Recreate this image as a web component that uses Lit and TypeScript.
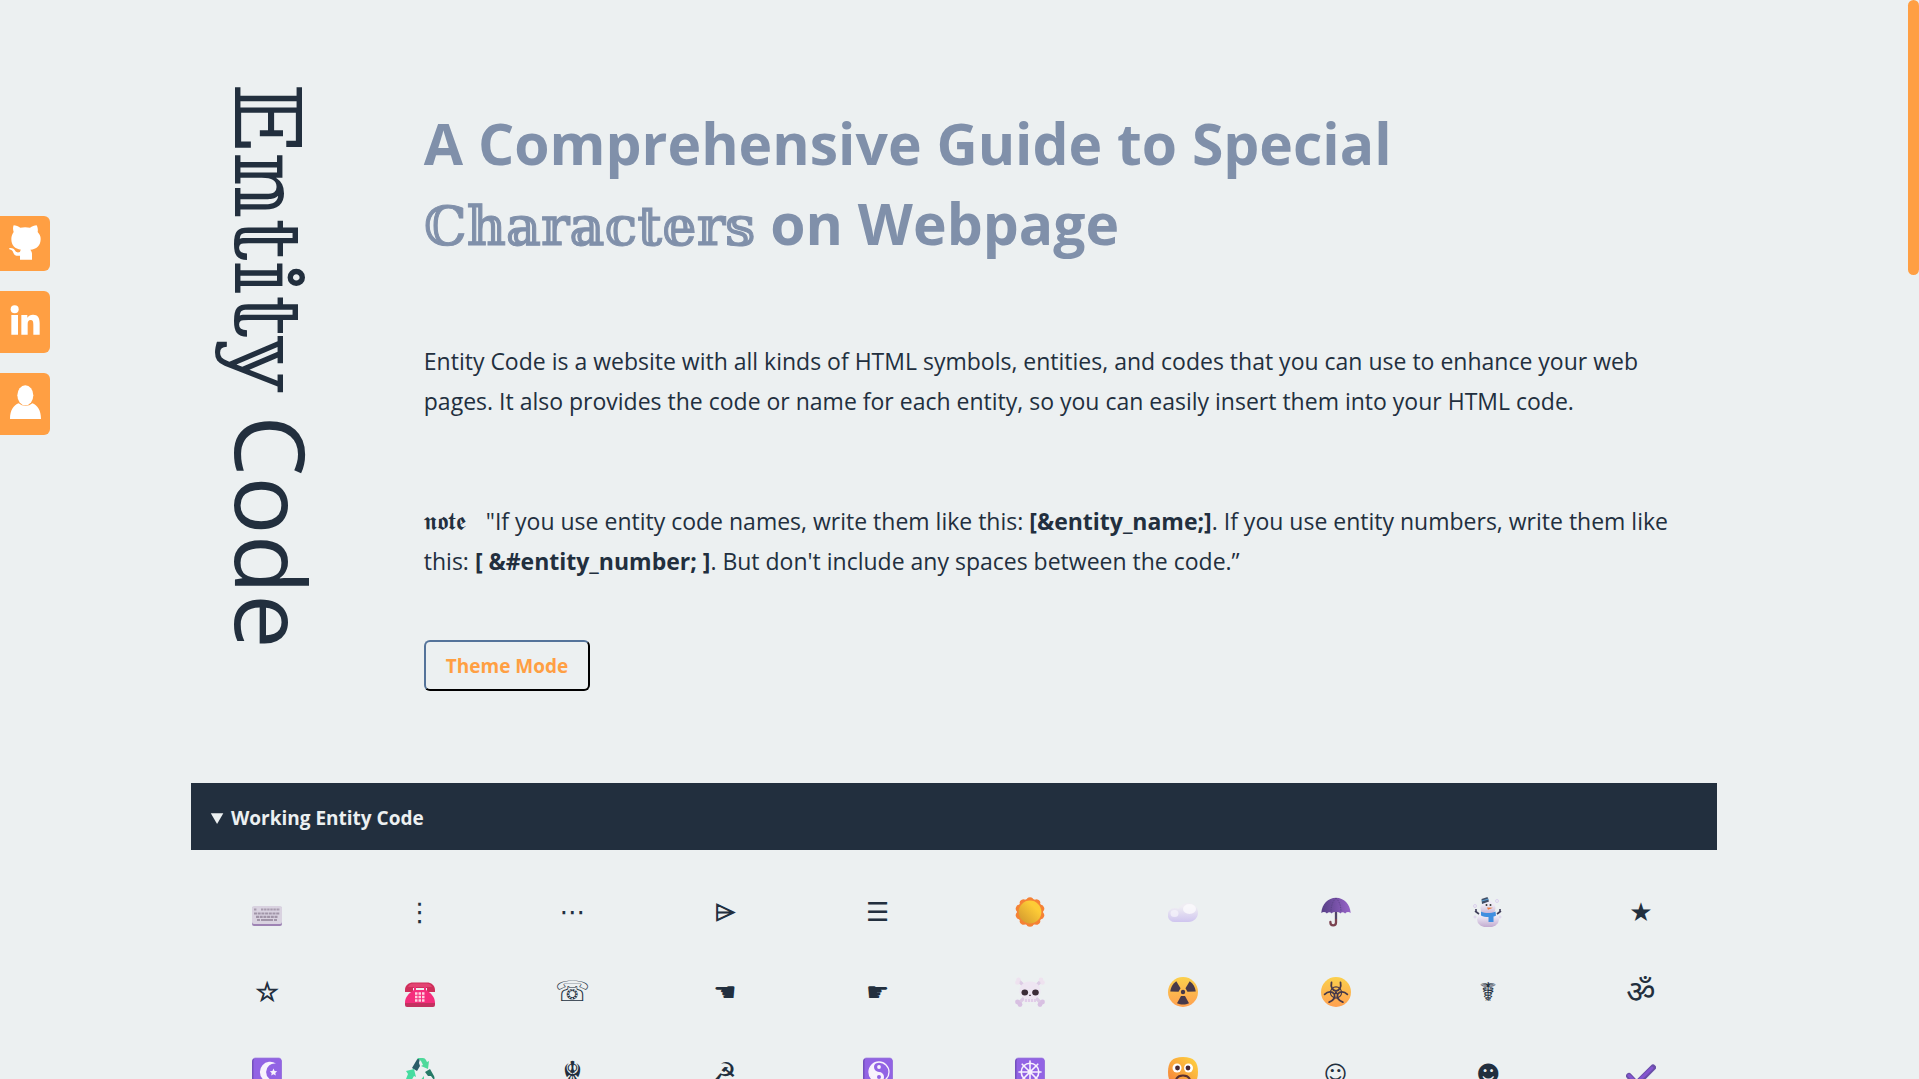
import { LitElement, html, svg, css } from "lit";
import { customElement, state } from "lit/decorators.js";

type Entity = { name: string; char?: string; size?: string; art?: unknown };

const tile = svg`
  <rect x="0.5" y="0.5" width="29" height="29" rx="3" fill="#b79ceb"/>
  <rect x="0" y="1.5" width="29.5" height="28.5" rx="3" fill="#7350bd"/>
  <rect x="1.5" y="1.5" width="28" height="27.5" rx="2.5" fill="#9263e4"/>`;

const keyboardArt = svg`
  <rect x="0" y="10" width="30" height="19" rx="2" fill="#9e83b4"/>
  <rect x="0" y="9" width="30" height="18" rx="2" fill="#d9d2e0"/>
  <path d="M2 12.5h3M9 12.5h19" stroke="#a79bad" stroke-width="2" stroke-dasharray="2.4 .7"/>
  <path d="M2 16.5h26M4 19.8h22" stroke="#a195a8" stroke-width="2.2" stroke-dasharray="3 .7"/>
  <path d="M5 23h3M9 23h12M22 23h3" stroke="#a195a8" stroke-width="2.2"/>`;

const sunArt = svg`
  <g fill="#f58235">
    ${[0, 36, 72, 108, 144, 180, 216, 252, 288, 324].map(
      (a) => svg`<circle cx="15" cy="3.8" r="3.6" transform=${`rotate(${a} 15 15)`}/>`
    )}
    <circle cx="15" cy="15" r="13.2"/>
  </g>
  <circle cx="15" cy="15" r="11.4" fill="url(#sun)"/>`;

const cloudArt = svg`
  <path d="M7 25a7 7 0 0 1-.5-14c1.500 0 3 .3 4 1C12 8 16 6 20 6c6 0 10 4.300 10 9.500S26 25 20.500 25z" fill="url(#cloud)"/>
  <ellipse cx="21.500" cy="12" rx="6.500" ry="5" fill="#fbfafc" opacity=".8"/>
  <ellipse cx="6.500" cy="16.500" rx="4" ry="3.600" fill="#f7f5fb" opacity=".7"/>`;

const umbrellaArt = svg`
  <path d="M15 14v11.500a2.800 2.800 0 0 1-5.600 0v-.5" fill="none" stroke="#7b4350" stroke-width="2.300" stroke-linecap="round"/>
  <path d="M15 12v10" stroke="#514669" stroke-width="2"/>
  <path d="M.3 16C1 7 7 1 15 .8 23 1 29 7 29.700 16c-1.700-1.300-3.800-1.300-5.600.4-1.400-1.700-3.600-1.700-4.700 0-1.300-1.900-7.500-1.900-8.800 0-1.100-1.700-3.300-1.700-4.700 0C4.100 14.700 2 14.700.3 16z" fill="url(#umb)"/>
  <path d="M15 1c-4 4-5 9-5 14M15 1c4 4 5 9 5 14" fill="none" stroke="#54407f" stroke-width=".7" stroke-dasharray="1.500 1"/>`;

const snowmanArt = svg`
  <g fill="none" stroke="#dcd0ee"><circle cx="2" cy="9" r="1.500"/><circle cx="24" cy="4" r="1.500"/><circle cx="2" cy="20" r="1"/><circle cx="27" cy="20" r="1"/></g>
  <path d="M6 17l-4-3M3 12v3M24 17l4-3M27 12v3" stroke="#3f3e5a" stroke-width="1.600"/>
  <ellipse cx="15" cy="22.500" rx="11" ry="8" fill="url(#snow)"/>
  <circle cx="15" cy="11" r="7.500" fill="url(#snow)"/>
  <path d="M8 14.500c4 2 10 2 14.500 0l.5 4c-1 .8-2 1-2.500 1v5.500h-5v-5c-3 0-5.500-.5-7.500-1.500z" fill="#3f8fe0"/>
  <path d="M8.500 2l6-2 1.500 4.500-7 2.500z" fill="#435068"/><path d="M8.800 4l6.700-2" stroke="#5c9fd2" stroke-width="1.200"/>
  <path d="M14 10.500l6 .3-5 2z" fill="#ee7a38"/><circle cx="13.500" cy="8" r="1" fill="#333"/><circle cx="17.500" cy="8" r="1" fill="#333"/>`;

const phoneArt = svg`
  <path d="M0 13C0 8 4 5.500 8 5.500h14c4 0 8 2.500 8 7.500v2h-8v-4H8v4H0z" fill="#cf2f5b"/>
  <path d="M3 10c1-2.500 3-3.500 6-3.500h12c3 0 5 1 6 3.500z" fill="#e24472"/>
  <path d="M0 25.500h30V28a2 2 0 0 1-2 2H2a2 2 0 0 1-2-2z" fill="#c33160"/>
  <path d="M9 13V10h2v3h8v-3h2v3c5 3 9 7 9 13H0c0-6 4-10 9-13z" fill="#f52d7c"/>
  <path d="M10 16.500h10M10 20h10M10 23.500h10" stroke="#ffd3e1" stroke-width="2.500" stroke-dasharray="2.500 1"/>`;

const skullArt = svg`
  <path d="M4 4l22 22M26 4L4 26" stroke="#dccbe4" stroke-width="3.200"/>
  <g fill="#eee2ef"><circle cx="3.500" cy="2.800" r="2.300"/><circle cx="2.400" cy="5.500" r="2.300"/><circle cx="26" cy="2.800" r="2.300"/><circle cx="27.600" cy="5.500" r="2.300"/></g>
  <g fill="#d8c0e2"><circle cx="2.500" cy="25" r="2.400"/><circle cx="5" cy="27.500" r="2.400"/><circle cx="27.500" cy="25" r="2.400"/><circle cx="25" cy="27.500" r="2.400"/></g>
  <path d="M15 4.500c7 0 10.500 4.500 10.500 9.500 0 4-2 6-4.500 7v4H9v-4c-2.500-1-4.500-3-4.500-7C4.500 9 8 4.500 15 4.500z" fill="#eee5f2"/>
  <path d="M11 22v3M14 22v3M17 22v3M20 22v3" stroke="#d3b6df"/>
  <ellipse cx="9.800" cy="15.500" rx="3.300" ry="3" fill="#3b2c38"/><ellipse cx="20.500" cy="15.500" rx="3.300" ry="3" fill="#3b2c38"/><path d="M14 19l1-1.800 1 1.800z" fill="#3b2c38"/>`;

const radioArt = svg`
  <circle cx="15" cy="15" r="15" fill="url(#amber)"/>
  <g fill="#47394a"><circle cx="15" cy="15" r="2.200"/>
  ${[0, 120, 240].map(
    (a) => svg`<path transform=${`rotate(${a} 15 15)`} d="M13 19h4l4 7.200c-3.500 1.800-8.500 1.800-12 0z"/>`
  )}</g>`;

const bioArt = svg`
  <circle cx="15" cy="15" r="15" fill="url(#amber)"/>
  <circle cx="15" cy="15.500" r="5.600" fill="none" stroke="#47394a" stroke-width="1.100"/>
  <g fill="none" stroke="#47394a" stroke-width="1.800" stroke-linecap="round">
  ${[0, 120, 240].map(
    (a) => svg`<path transform=${`rotate(${a} 15 16)`} d="M10.500 5.500C9.500 10 11.500 13.500 15 14c3.500-.5 5.500-4 4.500-8.500M15 14v2"/>`
  )}</g>`;

const moonArt = svg`${tile}
  <path d="M24 6.500A10.300 10.300 0 1 0 24 23.500 8.600 8.600 0 1 1 24 6.500z" fill="#f8f2fd"/>
  <path d="M21.500 11.500l1.100 2.400 2.600.3-1.900 1.800.5 2.600-2.300-1.300-2.300 1.300.5-2.600-1.900-1.800 2.600-.3z" fill="#f8f2fd"/>`;

const recycleArt = svg`
  <path d="M7 11L12 2.500Q13 1 15 1l-1 5 1 3-3 5z" fill="#2a5c68"/>
  <path d="M12 1h6q2 0 3 2l1 2 2-1-1 8-7-3 2-1-2-4z" fill="#4fd99b"/>
  <path d="M20 15l5-3 4 7q1 2 0 4l-3-4h-3z" fill="#267a67"/>
  <path d="M29 23l-2 4q-1 2-3 2h-5v2l-5-6 5-6v3h6z" fill="#4fd99b"/>
  <path d="M1 14l8-2 2 8-2-1-3 5 7 .5V29H5q-3 0-4-3-1-2 0-4l2-5z" fill="#46dca0"/>
  <path d="M5 23h7v6H5q-2 0-3-2z" fill="#267a67"/>`;

const yinArt = svg`${tile}
  <circle cx="16" cy="15" r="10" fill="none" stroke="#f8f2fd" stroke-width="1.300"/>
  <path d="M16 5a10 10 0 1 0 0 20 5 5 0 0 0 0-10 5 5 0 0 1 0-10z" fill="#f8f2fd"/>
  <circle cx="16" cy="10" r="1.900" fill="#f8f2fd"/><circle cx="16" cy="20" r="2" fill="#9263e4"/>`;

const wheelArt = svg`${tile}
  <g stroke="#f8f2fd" fill="none" stroke-width="1.600"><circle cx="15" cy="15" r="8.800"/>
  ${[0, 45, 90, 135].map((a) => svg`<path stroke-linecap="round" transform=${`rotate(${a} 15 15)`} d="M15 4v22"/>`)}</g>
  <circle cx="15" cy="15" r="2.400" fill="#f8f2fd"/>`;

const frownArt = svg`
  <path d="M15 0C26 0 30 5 30 15s-4 15-15 15S0 25 0 15 4 0 15 0z" fill="url(#face)"/>
  <circle cx="9" cy="11" r="4.500" fill="#fff"/><circle cx="20.500" cy="11" r="4.500" fill="#fff"/>
  <circle cx="9.500" cy="11" r="2.400" fill="#4a2a33"/><circle cx="20" cy="11" r="2.400" fill="#4a2a33"/>
  <path d="M8.500 21.500c2.500-4 10.500-4 13 0" fill="none" stroke="#5a3030" stroke-width="2" stroke-linecap="round"/>`;

const checkArt = svg`
  <path d="M3 19l7.500 8L27 10.500" fill="none" stroke="#6a4fa8" stroke-width="6" stroke-linecap="round" stroke-linejoin="round"/>
  <path d="M3 18.500l7.500 7.500L26 11" fill="none" stroke="#8455cf" stroke-width="3" stroke-linecap="round" stroke-linejoin="round"/>`;

const entities: Entity[] = [
  { name: "Keyboard", art: keyboardArt },
  { name: "Vertical ellipsis", char: "⋮" },
  { name: "Midline ellipsis", char: "⋯" },
  { name: "Conical taper", char: "⌲", size: "heavy" },
  { name: "Trigram", char: "☰" },
  { name: "Sun", art: sunArt },
  { name: "Cloud", art: cloudArt },
  { name: "Umbrella", art: umbrellaArt },
  { name: "Snowman", art: snowmanArt },
  { name: "Black star", char: "★" },
  { name: "White star", char: "☆", size: "heavy" },
  { name: "Telephone", art: phoneArt },
  { name: "White telephone", char: "☏", size: "medium" },
  { name: "Left pointing hand", char: "☚" },
  { name: "Right pointing hand", char: "☛" },
  { name: "Skull and crossbones", art: skullArt },
  { name: "Radioactive", art: radioArt },
  { name: "Biohazard", art: bioArt },
  { name: "Caduceus", char: "☤" },
  { name: "Om", char: "ॐ", size: "large" },
  { name: "Star and crescent", art: moonArt },
  { name: "Recycling", art: recycleArt },
  { name: "Adi Shakti", char: "☬", size: "medium" },
  { name: "Hammer and sickle", char: "☭" },
  { name: "Yin yang", art: yinArt },
  { name: "Wheel of dharma", art: wheelArt },
  { name: "Frowning face", art: frownArt },
  { name: "Smiling face", char: "☺", size: "small" },
  { name: "Black smiling face", char: "☻", size: "small" },
  { name: "Check mark", art: checkArt },
];

@customElement("app-root")
export class AppRoot extends LitElement {
  @state() private dark = false;

  static styles = css`
    :host {
      display: block;
      --paper: #ecf0f1;
      --ink: #222f3e;
      --heading: #8090aa;
      --accent: #ff9f43;
      font-family: "Open Sans", "Noto Sans", sans-serif;
    }
    * { box-sizing: border-box; margin: 0; padding: 0; }
    .shell {
      display: grid;
      grid-template-columns: minmax(0, 1fr) 11px;
      height: 100vh;
      background: var(--paper);
      color: var(--ink);
    }
    .shell.dark { --paper: #222f3e; --ink: #ecf0f1; }
    .page { overflow-y: auto; scrollbar-width: none; }
    .thumb { height: 275px; border-radius: 6px; background: var(--accent); }
    .content { width: 80%; margin: 0 auto; }
    .social {
      position: fixed;
      left: 0;
      top: 216px;
      display: flex;
      flex-direction: column;
      gap: 20px;
    }
    .social a {
      display: flex;
      align-items: center;
      justify-content: center;
      width: 50px;
      height: 62px;
      padding-bottom: 4px;
      border-radius: 0 6px 6px 0;
      background: var(--accent);
    }
    .social a.short { height: 55px; padding-bottom: 2px; }
    .social svg { fill: #fff; }
    .hero { display: flex; padding-top: 83px; min-height: 783px; }
    .title {
      flex: none;
      width: 233px;
      padding-right: 75px;
      writing-mode: vertical-rl;
      text-orientation: sideways;
      font-weight: 400;
      font-size: 97px;
      line-height: 152px;
      white-space: nowrap;
    }
    .struck { font-family: "DejaVu Serif", "DejaVu Sans", serif; font-weight: 400; }
    .title .struck { font-size: 91px; }
    .lead .struck { font-size: 54px; line-height: 72px; -webkit-text-stroke: 1px currentColor; }
    .intro { flex: 1; padding-top: 20px; padding-right: 36px; }
    .lead { font-size: 57px; line-height: 80px; font-weight: 700; color: var(--heading); margin-bottom: 78px; }
    .text { font-size: 23px; line-height: 40px; margin-bottom: 80px; }
    .text.last { margin-bottom: 59px; }
    .note { font-family: "DejaVu Sans", serif; font-size: 25px; line-height: 24px; margin-right: 14px; }
    .theme {
      height: 51px;
      padding: 0 20px;
      font-family: inherit;
      font-size: 19px;
      font-weight: 700;
      color: var(--accent);
      background: transparent;
      border: 2px solid;
      border-color: #54739a #000 #000 #54739a;
      border-radius: 6px;
    }
    .bar {
      height: 67px;
      padding: 2px 20px 0;
      line-height: 67px;
      font-size: 19px;
      font-weight: 700;
      color: #ecf0f1;
      background: #222f3e;
    }
    .entities {
      display: grid;
      grid-template-columns: repeat(10, minmax(0, 1fr));
      grid-auto-rows: 80px;
      padding-top: 22px;
      list-style: none;
    }
    .entity { display: flex; align-items: center; justify-content: center; font-family: "DejaVu Sans", "Noto Sans", sans-serif; font-size: 26px; line-height: 40px; }
    .medium { font-size: 28px; }
    .large { font-size: 32px; }
    .small { font-size: 23px; padding-top: 4px; }
    .heavy { -webkit-text-stroke: 1px currentColor; }
  `;

  private toggle() {
    this.dark = !this.dark;
  }

  render() {
    return html`
      <div class="shell ${this.dark ? "dark" : ""}">
        <main class="page">
          <div class="content">
            <section class="hero">
              <h1 class="title"><span class="struck">𝔼𝕟𝕥𝕚𝕥𝕪</span> Code</h1>
              <div class="intro">
                <h2 class="lead">A Comprehensive Guide to Special <span class="struck">ℂ𝕙𝕒𝕣𝕒𝕔𝕥𝕖𝕣𝕤</span> on Webpage</h2>
                <p class="text">Entity Code is a website with all kinds of HTML symbols, entities, and codes that you can use to enhance your web pages. It also provides the code or name for each entity, so you can easily insert them into your HTML code.</p>
                <p class="text last"><span class="note">𝖓𝖔𝖙𝖊</span> "If you use entity code names, write them like this: <b>[&amp;entity_name;]</b>. If you use entity numbers, write them like this: <b>[ &amp;#entity_number; ]</b>. But don't include any spaces between the code.”</p>
                <button class="theme" @click=${this.toggle}>Theme Mode</button>
              </div>
            </section>
            <details open>
              <summary class="bar">Working Entity Code</summary>
              <ul class="entities">
                ${entities.map((e) => html`<li class="entity ${e.size ?? ""}" title=${e.name}>${
                  e.art
                    ? html`<svg width="30" height="30" viewBox="0 0 30 30" aria-hidden="true">
                        <defs>
                          <linearGradient id="sun" x1="1" y1="0" x2="0" y2="1"><stop offset=".3" stop-color="#fdcb36"/><stop offset="1" stop-color="#cf942e"/></linearGradient>
                          <linearGradient id="cloud" x1="0" y1="0" x2="0" y2="1"><stop offset=".2" stop-color="#efedf3"/><stop offset="1" stop-color="#cfc5ef"/></linearGradient>
                          <linearGradient id="umb"><stop offset="0" stop-color="#574086"/><stop offset="1" stop-color="#9763c8"/></linearGradient>
                          <linearGradient id="snow" x1="0" y1="0" x2="0" y2="1"><stop offset=".3" stop-color="#eeeaf5"/><stop offset="1" stop-color="#c0a8ce"/></linearGradient>
                          <linearGradient id="amber" x1="0" y1="0" x2="0" y2="1"><stop offset="0" stop-color="#fbd04c"/><stop offset="1" stop-color="#ffa050"/></linearGradient>
                          <linearGradient id="face" x1="1" y1="0" x2="0" y2="1"><stop offset="0" stop-color="#ffd63f"/><stop offset="1" stop-color="#f57c3a"/></linearGradient>
                        </defs>
                        ${e.art}</svg>`
                    : e.char
                }</li>`)}
              </ul>
            </details>
          </div>
        </main>
        <div class="thumb"></div>
        <nav class="social" aria-label="Social links">
          <a class="short" href="#github" aria-label="GitHub">
            <svg width="32" height="35" viewBox="0 0 96 105"><path d="M14 1c7 0 14 3 20 7 9-2 20-2 29 0C69 4 76 1 83 1c4 8 4 15 3 20 6 7 9 13 9 21 0 20-13 31-31 32 3 4 5 8 5 12v18H33V92c-10 2-17-1-20-9-2-6-6-9-12-10-2-2 0-4 3-4 8 0 12 4 15 9 4 5 8 5 14 3 0-3 1-5 3-7C18 72 7 61 7 42c0-8 3-15 7-21-2-6-3-13 0-20z"/></svg>
          </a>
          <a href="#linkedin" aria-label="LinkedIn">
            <svg width="30" height="30" viewBox="0 0 90 90"><circle cx="14" cy="13" r="12"/><path d="M4 30h20v59H4zM34 30h18v8c4-6 9-9 17-9 15 0 20 10 20 26v34H70V59c0-8-1-14-8-14s-9 5-9 13v31H34z"/></svg>
          </a>
          <a href="#profile" aria-label="Profile">
            <svg width="31" height="34" viewBox="0 0 93 102"><path d="M0 102c0-26 11-42 26-47 12 10 30 10 41 0 15 5 26 21 26 47z"/><ellipse cx="46" cy="31" rx="24" ry="30"/></svg>
          </a>
        </nav>
      </div>
    `;
  }
}
